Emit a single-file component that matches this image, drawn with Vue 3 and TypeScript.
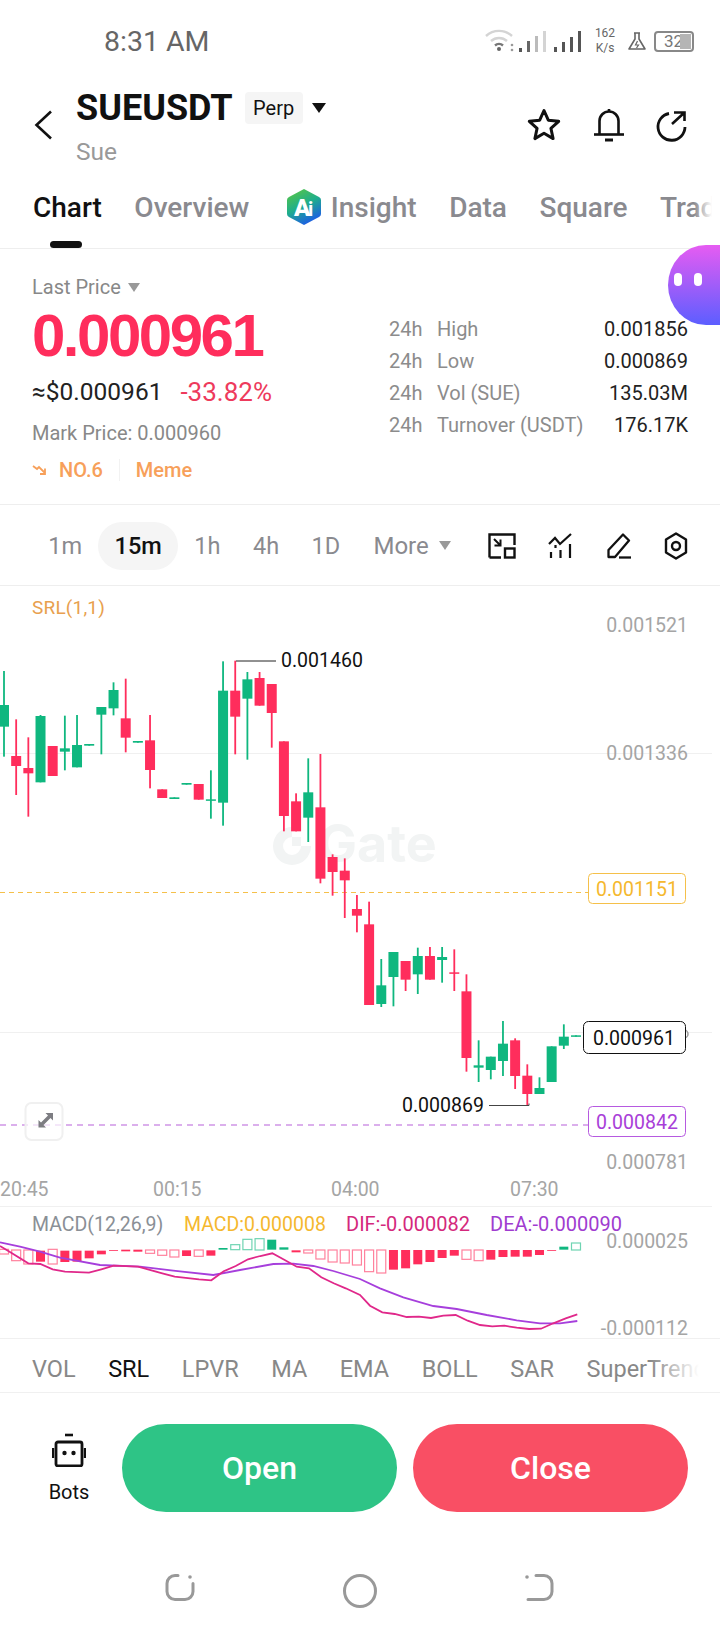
<script setup lang="ts">
// wick top, body top, body bottom, wick bottom, 1 = green; read off the chart in 3x units
type Candle = [number, number, number, number, number]

const leftCandles: Candle[] = [
  [243, 345, 410, 500, 1], [388, 498, 528, 615, 0], [442, 534, 550, 680, 0], [375, 378, 577, 577, 1],
  [468, 468, 558, 558, 0], [377, 475, 485, 541, 1], [375, 465, 532, 532, 1], [462, 462, 467, 467, 1],
  [351, 351, 374, 493, 1], [277, 300, 355, 376, 1], [266, 385, 443, 487, 0], [453, 453, 458, 458, 1],
  [375, 451, 540, 595, 0], [598, 598, 624, 624, 0], [622, 622, 627, 627, 1], [579, 579, 584, 584, 1],
  [582, 582, 629, 629, 0], [541, 628, 632, 686, 1], [214, 302, 638, 707, 1], [212, 302, 380, 493, 0],
  [246, 268, 326, 509, 1], [246, 264, 347, 347, 0], [282, 282, 369, 473, 0], [454, 454, 678, 724, 0],
  [610, 634, 724, 724, 0], [505, 607, 683, 756, 1], [492, 652, 866, 880, 0], [793, 801, 846, 917, 0],
  [805, 842, 871, 984, 0], [915, 957, 977, 1027, 0]
]
const rightCandles: Candle[] = [
  [65, 133, 375, 375, 0], [237, 316, 372, 381, 1], [216, 216, 291, 379, 1], [243, 243, 299, 333, 0],
  [203, 228, 283, 342, 1], [201, 228, 299, 299, 0], [201, 231, 240, 308, 1], [208, 277, 281, 333, 0],
  [283, 334, 534, 575, 0], [481, 556, 563, 606, 1], [530, 530, 570, 598, 1], [423, 491, 543, 588, 1],
  [475, 481, 588, 627, 0], [553, 587, 642, 678, 0], [592, 624, 642, 642, 1], [499, 499, 606, 606, 1],
  [433, 470, 497, 507, 1], [466, 466, 470, 470, 1]
]

const candles = [...leftCandles.map((c) => c.map((v, i) => (i < 4 ? 590 + v / 3 : v))),
  ...rightCandles.map((c) => c.map((v, i) => (i < 4 ? 880 + v / 3 : v)))]
  .map((c, i) => ({
    x: 4 + i * 12.17,
    wickTop: c[0],
    top: c[1],
    bottom: c[2],
    wickBottom: c[3],
    color: c[4] ? '#0fb77f' : '#ff2d5c'
  }))

// top, bottom, filled, green
type Bar = [number, number, number, number]
const macdRaw: Bar[] = [
  [178, 192, 0, 0], [180, 212, 0, 0], [180, 222, 0, 0], [182, 215, 1, 0], [178, 222, 0, 0], [182, 216, 1, 0],
  [182, 215, 1, 0], [182, 205, 1, 0], [182, 193, 1, 0], [180, 182, 1, 0], [179, 184, 1, 0], [179, 185, 1, 0],
  [180, 190, 0, 0], [180, 196, 0, 0], [180, 201, 0, 0], [181, 198, 1, 0], [180, 199, 0, 0], [181, 197, 1, 0],
  [174, 179, 1, 1], [164, 179, 0, 1], [148, 179, 0, 1], [146, 180, 0, 1], [149, 179, 1, 1], [172, 179, 1, 1],
  [181, 187, 1, 0], [180, 189, 0, 0], [180, 207, 0, 0], [180, 216, 0, 0], [180, 219, 0, 0], [180, 225, 0, 0],
  [180, 245, 0, 0], [180, 249, 0, 0], [180, 239, 1, 0], [180, 235, 1, 0], [180, 223, 1, 0], [180, 216, 1, 0],
  [180, 204, 1, 0], [180, 197, 1, 0], [180, 208, 0, 0], [180, 212, 0, 0], [180, 209, 1, 0], [180, 201, 1, 0],
  [180, 200, 1, 0], [180, 200, 1, 0], [180, 195, 1, 0], [180, 182, 1, 0], [170, 179, 1, 1], [159, 180, 0, 1]
]
const macdBars = macdRaw.map((b, i) => ({
  x: 4 + i * 12.17,
  y: 1190 + b[0] / 3,
  h: (b[1] - b[0]) / 3,
  filled: !!b[2],
  color: b[3] ? '#0fb77f' : '#ff2d5c'
}))

function linePoints(left: number[][], right: number[][]): string {
  return [...left, ...right.map(([x, y]) => [x + 1080, y])]
    .map(([x, y]) => `${(x / 3).toFixed(1)},${(1190 + y / 3).toFixed(1)}`)
    .join(' ')
}

const deaLine = linePoints(
  [[0, 157], [60, 170], [120, 185], [180, 203], [300, 225], [420, 230], [520, 242], [640, 255], [720, 240], [820, 222], [880, 221], [940, 228], [1000, 243]],
  [[0, 267], [60, 295], [130, 322], [220, 348], [290, 357], [380, 375], [470, 391], [540, 400], [600, 400], [652, 393]]
)
const difLine = linePoints(
  [[0, 168], [36, 190], [85, 220], [121, 222], [158, 238], [195, 245], [267, 248], [304, 238], [341, 227], [414, 230], [487, 250], [524, 260], [597, 268], [634, 271], [671, 244], [707, 228], [744, 208], [781, 198], [817, 190], [854, 210], [890, 230], [927, 235], [964, 262], [1001, 280], [1037, 295]],
  [[0, 315], [30, 347], [67, 367], [104, 372], [140, 381], [177, 380], [213, 384], [250, 377], [287, 375], [323, 392], [360, 405], [397, 409], [433, 407], [470, 413], [507, 417], [543, 416], [580, 400], [617, 385], [652, 373]]
)

const stats = [
  { label: 'High', value: '0.001856' },
  { label: 'Low', value: '0.000869' },
  { label: 'Vol (SUE)', value: '135.03M' },
  { label: 'Turnover (USDT)', value: '176.17K' }
]
const periods = ['1m', '15m', '1h', '4h', '1D']
const indicators = ['VOL', 'SRL', 'LPVR', 'MA', 'EMA', 'BOLL', 'SAR', 'SuperTrend']
const axisLabels = [
  { y: 632, text: '0.001521' },
  { y: 760, text: '0.001336' },
  { y: 1169, text: '0.000781' },
  { y: 1248, text: '0.000025' },
  { y: 1335, text: '-0.000112' }
]
const timeLabels = [
  { x: 0, text: '20:45' },
  { x: 153, text: '00:15' },
  { x: 331, text: '04:00' },
  { x: 510, text: '07:30' }
]
</script>

<template>
  <div class="page">
    <div class="status">
      <span class="time">8:31 AM</span>
      <div class="status-right">
        <svg class="signal" width="97" height="26" viewBox="0 0 97 26">
          <g fill="none" stroke="#d4d4d4" stroke-width="2.4">
            <path d="M1 9a19 19 0 0 1 26 0" />
            <path d="M6 14a12 12 0 0 1 16 0" />
          </g>
          <path d="M10 18.500a6 6 0 0 1 8 0" fill="none" stroke="#777" stroke-width="2.4" />
          <circle cx="14" cy="22" r="2" fill="#666" />
          <circle cx="27" cy="18" r="1.3" fill="#999" /><circle cx="27" cy="23" r="1.3" fill="#999" />
          <rect x="34" y="21" width="3" height="4" fill="#555" />
          <rect x="42" y="14" width="3" height="11" fill="#666" />
          <rect x="50" y="9" width="3" height="16" fill="#bbb" />
          <rect x="58" y="4" width="3" height="21" fill="#d4d4d4" />
          <rect x="69" y="20" width="3" height="5" fill="#555" />
          <rect x="77" y="15" width="3" height="10" fill="#555" />
          <rect x="85" y="10" width="3" height="15" fill="#555" />
          <rect x="93" y="4" width="3" height="21" fill="#555" />
        </svg>
        <div class="speed"><span>162</span><span>K/s</span></div>
        <svg width="20" height="20" viewBox="0 0 20 20" class="flask">
          <path d="M7 2h6M8 2v6L2 18h16L12 8V2" fill="none" stroke="#666" stroke-width="1.6" stroke-linejoin="round" />
          <path d="M10.5 10l-2 4h3l-2 3" fill="none" stroke="#666" stroke-width="1.2" />
        </svg>
        <div class="battery"><span>32</span><i></i></div>
      </div>
    </div>

    <div class="head">
      <svg class="back" width="19" height="30" viewBox="0 0 19 30">
        <path d="M17 1.500L2.500 15 17 28.500" fill="none" stroke="#111" stroke-width="2.6" />
      </svg>
      <div class="title-box">
        <div class="title-row">
          <span class="symbol">SUEUSDT</span>
          <span class="chip">Perp</span>
          <i class="caret-dark"></i>
        </div>
        <div class="coin">Sue</div>
      </div>
      <div class="head-icons">
        <svg width="36" height="36" viewBox="0 0 36 36">
          <path d="M18 3.500l4.300 9.700 10.400 1.100-7.800 7 2.200 10.300L18 26.300 8.900 31.600l2.200-10.300-7.800-7 10.400-1.100z" fill="none" stroke="#111" stroke-width="3" stroke-linejoin="round" />
        </svg>
        <svg width="32" height="36" viewBox="0 0 32 36">
          <path d="M6.500 27V14a9.500 9.500 0 0 1 19 0v13" fill="none" stroke="#111" stroke-width="2.600" />
          <path d="M1 27.500h30" stroke="#111" stroke-width="2.600" />
          <path d="M12 33h8" stroke="#111" stroke-width="3" />
          <path d="M16 2v3" stroke="#111" stroke-width="2.600" />
        </svg>
        <svg width="31" height="36" viewBox="0 0 31 36">
          <path d="M13 6.500A13.500 13.500 0 1 0 29 20" fill="none" stroke="#111" stroke-width="2.800" />
          <path d="M16 17L28.500 5.500M18 5.500h10.500V14" fill="none" stroke="#111" stroke-width="2.600" />
        </svg>
      </div>
    </div>

    <div class="tabs">
      <span class="tab active">Chart</span>
      <span class="tab">Overview</span>
      <span class="tab insight">
        <svg width="34" height="36" viewBox="0 0 34 36">
          <defs>
            <linearGradient id="aiGrad" x1="0" y1="0" x2="0.5" y2="1">
              <stop offset="0" stop-color="#5fc93c" />
              <stop offset="0.55" stop-color="#1fae8c" />
              <stop offset="1" stop-color="#1d62e0" />
            </linearGradient>
          </defs>
          <path d="M17 0l15 8q2 1 2 3v14q0 2-2 3l-15 8-15-8q-2-1-2-3V11q0-2 2-3z" fill="url(#aiGrad)" />
          <text x="7" y="27" class="ai-text">A</text>
          <text x="21" y="27" class="ai-text thin">i</text>
        </svg>
        Insight
      </span>
      <span class="tab">Data</span>
      <span class="tab">Square</span>
      <span class="tab">Trade</span>
      <div class="tabs-fade"></div>
    </div>

    <div class="blob"><i></i><i></i></div>

    <div class="summary">
      <div class="summary-left">
        <div class="last-price">Last Price <i class="caret-gray"></i></div>
        <div class="price">0.000961</div>
        <div class="usd-row">
          <span class="usd">≈$0.000961</span>
          <span class="change">-33.82%</span>
        </div>
        <div class="mark">Mark Price: 0.000960</div>
        <div class="tags">
          <svg width="18" height="12" viewBox="0 0 18 12">
            <path d="M1 2l4 3 2-2 6 6M13 4.500V10H8" fill="none" stroke="#f7a05a" stroke-width="1.800" />
          </svg>
          <span class="rank">NO.6</span>
          <span class="tag-line"></span>
          <span>Meme</span>
        </div>
      </div>
      <div class="stats">
        <div v-for="s in stats" :key="s.label" class="stat">
          <span class="stat-h">24h</span>
          <span class="stat-label">{{ s.label }}</span>
          <span class="stat-value">{{ s.value }}</span>
        </div>
      </div>
    </div>

    <div class="periods">
      <span v-for="p in periods" :key="p" class="period" :class="{ on: p === '15m' }">{{ p }}</span>
      <span class="more">More <i class="caret-gray"></i></span>
      <div class="tools">
        <svg width="28" height="26" viewBox="0 0 28 26">
          <path d="M1.500 24.500V1.500h25V12M1.500 24.500H13" fill="none" stroke="#111" stroke-width="2.400" />
          <rect x="17" y="15.500" width="9.500" height="9" fill="none" stroke="#111" stroke-width="2.400" />
          <path d="M6 6l6 6M12.500 6.500V12.500H6.500" fill="none" stroke="#111" stroke-width="2" />
        </svg>
        <svg width="26" height="26" viewBox="0 0 26 26">
          <path d="M1 11l6-6 5 6L23 1" fill="none" stroke="#111" stroke-width="2.200" />
          <path d="M3 19v6M12.500 17v8M22 11v14M7.500 12v3" fill="none" stroke="#111" stroke-width="2.200" />
        </svg>
        <svg width="26" height="26" viewBox="0 0 26 26">
          <path d="M17 1.500l6 6L9 24H2.500v-7z" fill="none" stroke="#111" stroke-width="2.300" stroke-linejoin="round" />
          <path d="M13 24.500h12" stroke="#111" stroke-width="2.300" />
        </svg>
        <svg width="24" height="28" viewBox="0 0 24 28">
          <path d="M12 1.500l10 6v13l-10 6-10-6v-13z" fill="none" stroke="#111" stroke-width="2.400" stroke-linejoin="round" />
          <circle cx="12" cy="14" r="4" fill="none" stroke="#111" stroke-width="2.400" />
        </svg>
      </div>
    </div>

    <svg class="chart" width="720" height="752" viewBox="0 586 720 752">
      <!-- grid -->
      <g stroke="#f0f0f0" stroke-width="1">
        <line x1="0" y1="753.500" x2="712" y2="753.500" />
        <line x1="0" y1="1032.500" x2="712" y2="1032.500" />
        <line x1="0" y1="1206.500" x2="712" y2="1206.500" />
      </g>

      <!-- watermark -->
      <g class="watermark">
        <path d="M311 846a19 19 0 1 1-19-19v10a9 9 0 1 0 9 9z" fill="#f2f4f4" />
        <rect x="292" y="837" width="9" height="9" fill="#f2f4f4" />
        <text x="318" y="862" class="mark-text">Gate</text>
      </g>

      <text x="32" y="614" class="srl">SRL(1,1)</text>

      <!-- price lines -->
      <line x1="0" y1="892.500" x2="588" y2="892.500" stroke="#f5c04a" stroke-dasharray="5 4" />
      <line x1="0" y1="1125" x2="588" y2="1125" stroke="#cf95e6" stroke-width="1.500" stroke-dasharray="6 5" />

      <!-- candles -->
      <g v-for="(c, i) in candles" :key="i">
        <rect :x="c.x - 0.9" :y="c.wickTop" width="1.800" :height="c.wickBottom - c.wickTop" :fill="c.color" />
        <rect :x="c.x - 5" :y="c.top" width="10" :height="Math.max(c.bottom - c.top, 1.500)" :fill="c.color" />
      </g>

      <!-- high / low -->
      <path d="M236 661h40" stroke="#222" fill="none" />
      <text x="281" y="667" class="tick dark">0.001460</text>
      <path d="M489 1105.500h40v-2" stroke="#444" fill="none" />
      <text x="402" y="1112" class="tick dark">0.000869</text>

      <!-- axis -->
      <text v-for="a in axisLabels" :key="a.text" x="688" :y="a.y" class="tick axis" text-anchor="end">{{ a.text }}</text>
      <text v-for="t in timeLabels" :key="t.text" :x="t.x" y="1196" class="tick axis">{{ t.text }}</text>

      <!-- boxes on the axis -->
      <rect x="588.500" y="873.500" width="97" height="30" rx="4" fill="#fff" stroke="#f5c04a" />
      <text x="596" y="896" class="tick" fill="#f5b82e">0.001151</text>
      <path d="M684 1030a4 4 0 0 1 4 4 4 4 0 0 1-4 4" fill="none" stroke="#999" stroke-width="1.500" />
      <rect x="583.500" y="1021.500" width="102" height="32" rx="5" fill="#fff" stroke="#111" />
      <text x="593" y="1045" class="tick" fill="#111">0.000961</text>
      <rect x="588.500" y="1106.500" width="97" height="30" rx="4" fill="#fff" stroke="#b65ae0" />
      <text x="596" y="1129" class="tick" fill="#a83ed8">0.000842</text>

      <!-- expand button -->
      <rect x="25.500" y="1103" width="37" height="37" rx="6" fill="#fff" fill-opacity="0.7" stroke="#f0f0f0" stroke-width="2" />
      <path d="M53 1113l-7.500 0 2.500 2.500-7 7-2.500-2.500v7.500h7.500l-2.500-2.500 7-7 2.500 2.500z" fill="#7d7d82" />

      <!-- macd -->
      <text x="32" y="1231" class="tick" fill="#8a8f96">MACD(12,26,9)</text>
      <text x="184" y="1231" class="tick" fill="#f5b82e">MACD:0.000008</text>
      <text x="346" y="1231" class="tick wide" fill="#d4287c">DIF:-0.000082</text>
      <text x="490" y="1231" class="tick wide" fill="#a03cd0">DEA:-0.000090</text>
      <g v-for="(b, i) in macdBars" :key="'m' + i">
        <rect v-if="b.filled" :x="b.x - 4.500" :y="b.y" width="9" :height="Math.max(b.h, 0.8)" :fill="b.color" />
        <rect v-else :x="b.x - 4.500" :y="b.y" width="9" :height="b.h" fill="none" :stroke="b.color" stroke-opacity="0.6" stroke-width="1.200" />
      </g>
      <polyline :points="deaLine" fill="none" stroke="#a63fdc" stroke-width="1.800" />
      <polyline :points="difLine" fill="none" stroke="#e0288a" stroke-width="1.800" />
    </svg>

    <div class="indicators">
      <span v-for="n in indicators" :key="n" :class="{ on: n === 'SRL' }">{{ n }}</span>
      <div class="indicators-fade"></div>
    </div>

    <div class="actions">
      <div class="bots">
        <svg width="34" height="34" viewBox="0 0 34 34">
          <path d="M13 2h8" stroke="#111" stroke-width="2.600" />
          <rect x="4" y="9" width="26" height="24" rx="2" fill="none" stroke="#111" stroke-width="2.800" />
          <path d="M1 15v10M33 15v10" stroke="#111" stroke-width="2.400" />
          <circle cx="12.500" cy="20" r="2.200" fill="#111" />
          <circle cx="21.500" cy="20" r="2.200" fill="#111" />
        </svg>
        <span>Bots</span>
      </div>
      <button class="trade open">Open</button>
      <button class="trade close">Close</button>
    </div>

    <div class="nav">
      <svg width="32" height="30" viewBox="0 0 32 30">
        <path d="M14 2.500H11a8 8 0 0 0-8 8v8a8 8 0 0 0 8 8h10a8 8 0 0 0 8-8v-8" fill="none" stroke="#999" stroke-width="3" stroke-linecap="round" />
        <circle cx="26" cy="4" r="1.800" fill="#999" />
      </svg>
      <svg width="36" height="36" viewBox="0 0 36 36">
        <circle cx="18" cy="18" r="15.500" fill="none" stroke="#999" stroke-width="3" />
      </svg>
      <svg width="32" height="30" viewBox="0 0 32 30">
        <path d="M12 2.500h8a8 8 0 0 1 8 8v8a8 8 0 0 1-8 8H4" fill="none" stroke="#999" stroke-width="3" stroke-linecap="round" />
        <circle cx="3" cy="4" r="1.800" fill="#999" />
      </svg>
    </div>
  </div>
</template>

<style>
body {
  background: #fff;
}
</style>

<style scoped>
.page {
  position: relative;
  width: 720px;
  height: 1640px;
  overflow: hidden;
  background: #fff;
  font-family: Roboto, "Liberation Sans", sans-serif;
  color: #111;
}

.status {
  height: 80px;
  display: flex;
  justify-content: space-between;
  align-items: flex-start;
  padding: 23px 26px 0 104px;
  box-sizing: border-box;
}
.time {
  font-size: 28.500px;
  line-height: 38px;
  color: #666;
}
.status-right {
  display: flex;
  align-items: center;
  margin-top: 3px;
}
.signal {
  margin-top: -2px;
}
.speed {
  display: flex;
  flex-direction: column;
  align-items: center;
  font-size: 12px;
  line-height: 15px;
  color: #666;
  margin-left: 12px;
  width: 22px;
}
.flask {
  margin-left: 11px;
}
.battery {
  position: relative;
  width: 40px;
  height: 21px;
  margin-left: 7px;
  border: 2px solid #888;
  border-radius: 4px;
  box-sizing: border-box;
  font-size: 17px;
  line-height: 17px;
  color: #777;
  padding-left: 8px;
}
.battery i {
  position: absolute;
  right: 1px;
  top: 1px;
  bottom: 1px;
  width: 11px;
  background: #b5b5b5;
}

.head {
  height: 88px;
  display: flex;
  align-items: flex-start;
  position: relative;
}
.back {
  margin: 30px 0 0 34px;
}
.title-box {
  margin-left: 23px;
}
.title-row {
  display: flex;
  align-items: center;
  height: 44px;
  margin-top: 6px;
}
.symbol {
  font-size: 36px;
  font-weight: 700;
}
.chip {
  margin-left: 12px;
  width: 58px;
  height: 32px;
  line-height: 32px;
  text-align: center;
  background: #f5f5f5;
  border-radius: 4px;
  font-size: 20px;
}
.caret-dark {
  margin-left: 9px;
  border-left: 7px solid transparent;
  border-right: 7px solid transparent;
  border-top: 10px solid #111;
}
.coin {
  font-size: 24.500px;
  line-height: 28px;
  margin-top: 8px;
  color: #999;
}
.head-icons {
  position: absolute;
  left: 526px;
  top: 27px;
  display: flex;
  gap: 31px;
  width: 164px;
}

.tabs {
  position: relative;
  height: 81px;
  display: flex;
  align-items: center;
  gap: 32.500px;
  padding: 0 0 2px 33px;
  box-sizing: border-box;
  border-bottom: 1px solid #eee;
  font-size: 28px;
  font-weight: 500;
  color: #8a8a8f;
  white-space: nowrap;
  overflow: hidden;
}
.tab {
  display: flex;
  align-items: center;
  flex: none;
}
.tab.active {
  position: relative;
  color: #111;
  align-self: stretch;
}
.tab.active::after {
  content: "";
  position: absolute;
  left: 17px;
  bottom: -2px;
  width: 32px;
  height: 7px;
  border-radius: 4px;
  background: #111;
}
.insight {
  margin-left: 5px;
  gap: 10px;
}
.ai-text {
  font-family: Roboto, sans-serif;
  font-size: 24px;
  font-weight: 900;
  fill: #fff;
}
.ai-text.thin {
  font-size: 20px;
  font-weight: 700;
}
.tabs-fade {
  position: absolute;
  right: 0;
  top: 0;
  bottom: 0;
  width: 26px;
  background: linear-gradient(to right, rgba(255, 255, 255, 0), #fff 70%);
}

.blob {
  position: absolute;
  left: 668px;
  top: 245px;
  width: 60px;
  height: 80px;
  border-radius: 38px 0 0 38px / 40px 0 0 40px;
  background: linear-gradient(to bottom, #e65cf2, #5c5eff);
  display: flex;
  gap: 12px;
  padding: 28px 0 0 6px;
  box-sizing: border-box;
}
.blob i {
  width: 8px;
  height: 13px;
  border-radius: 4px;
  background: #fff;
}

.summary {
  height: 255px;
  display: flex;
  border-bottom: 1px solid #eee;
}
.summary-left {
  width: 357px;
  padding: 23px 0 0 32px;
  box-sizing: border-box;
}
.last-price {
  display: flex;
  align-items: center;
  gap: 7px;
  font-size: 20px;
  line-height: 30px;
  color: #888;
}
.caret-gray {
  display: inline-block;
  border-left: 6px solid transparent;
  border-right: 6px solid transparent;
  border-top: 9px solid #999;
}
.price {
  font-family: "Liberation Sans", Arial, sans-serif;
  font-weight: 700;
  font-size: 60px;
  line-height: 66px;
  margin-top: 1px;
  letter-spacing: -2.500px;
  color: #ff2d5c;
}
.usd-row {
  display: flex;
  align-items: center;
  gap: 18px;
  font-size: 24.500px;
  line-height: 30px;
  margin-top: 8px;
  color: #222;
}
.change {
  font-size: 26px;
  color: #ee3a5c;
}
.mark {
  font-size: 20px;
  line-height: 28px;
  margin-top: 12px;
  color: #888;
}
.tags {
  display: flex;
  align-items: center;
  font-size: 20px;
  font-weight: 500;
  line-height: 28px;
  margin-top: 9px;
  color: #f7a05a;
}
.rank {
  margin-left: 9px;
}
.tag-line {
  width: 1px;
  height: 22px;
  background: #f2f2f2;
  margin: 0 16px;
}

.stats {
  flex: 1;
  padding: 64px 32px 0 32px;
}
.stat {
  display: flex;
  height: 32px;
  align-items: center;
  font-size: 20px;
  color: #8c8c8c;
}
.stat-h {
  width: 48px;
}
.stat-value {
  margin-left: auto;
  color: #222;
}

.periods {
  height: 81px;
  display: flex;
  align-items: center;
  font-size: 23.500px;
  color: #8a8a8f;
  border-bottom: 1px solid #eee;
  padding: 1px 0 0 32px;
  box-sizing: border-box;
}
.period {
  height: 48px;
  line-height: 48px;
  padding: 0 16.250px;
  border-radius: 24px;
}
.period.on {
  background: #f5f5f5;
  color: #111;
  font-weight: 500;
}
.more {
  display: flex;
  align-items: center;
  gap: 10px;
  margin-left: 17px;
  font-size: 24px;
}
.tools {
  margin-left: auto;
  margin-right: 32px;
  display: flex;
  align-items: center;
  gap: 32px;
}

.chart {
  display: block;
  overflow: visible;
}
.srl {
  font-size: 19px;
  letter-spacing: 0.2px;
  fill: #e8a04e;
}
.tick {
  font-size: 19.500px;
}
.tick.wide {
  font-size: 20px;
}
.tick.dark {
  fill: #111;
}
.tick.axis {
  fill: #a5a5a5;
}
.mark-text {
  font-family: Inter, sans-serif;
  font-size: 52px;
  font-weight: 700;
  fill: #f2f4f4;
}

.indicators {
  position: relative;
  height: 55px;
  display: flex;
  align-items: center;
  gap: 32.500px;
  padding: 7px 0 0 32px;
  box-sizing: border-box;
  border-top: 1px solid #f0f0f0;
  border-bottom: 1px solid #f0f0f0;
  font-size: 23.500px;
  color: #888;
  white-space: nowrap;
  overflow: hidden;
}
.indicators .on {
  color: #111;
}
.indicators-fade {
  position: absolute;
  right: 0;
  top: 0;
  bottom: 0;
  width: 70px;
  background: linear-gradient(to right, rgba(255, 255, 255, 0), #fff 70%);
}

.actions {
  height: 147px;
  display: flex;
  align-items: flex-start;
  padding: 31px 32px 0 32px;
  box-sizing: border-box;
}
.bots {
  width: 72px;
  margin-left: 1px;
  margin-right: 17px;
  display: flex;
  flex-direction: column;
  align-items: center;
  font-size: 20px;
  padding-top: 9px;
  gap: 13px;
}
.trade {
  width: 275px;
  height: 88px;
  border: 0;
  border-radius: 44px;
  color: #fff;
  font-family: inherit;
  font-size: 32px;
  font-weight: 500;
}
.open {
  background: #2ec486;
}
.close {
  margin-left: 16px;
  background: #f94f64;
}

.nav {
  height: 100px;
  display: flex;
  align-items: flex-start;
  padding: 33px 0 0 164px;
  gap: 146px;
}
</style>
